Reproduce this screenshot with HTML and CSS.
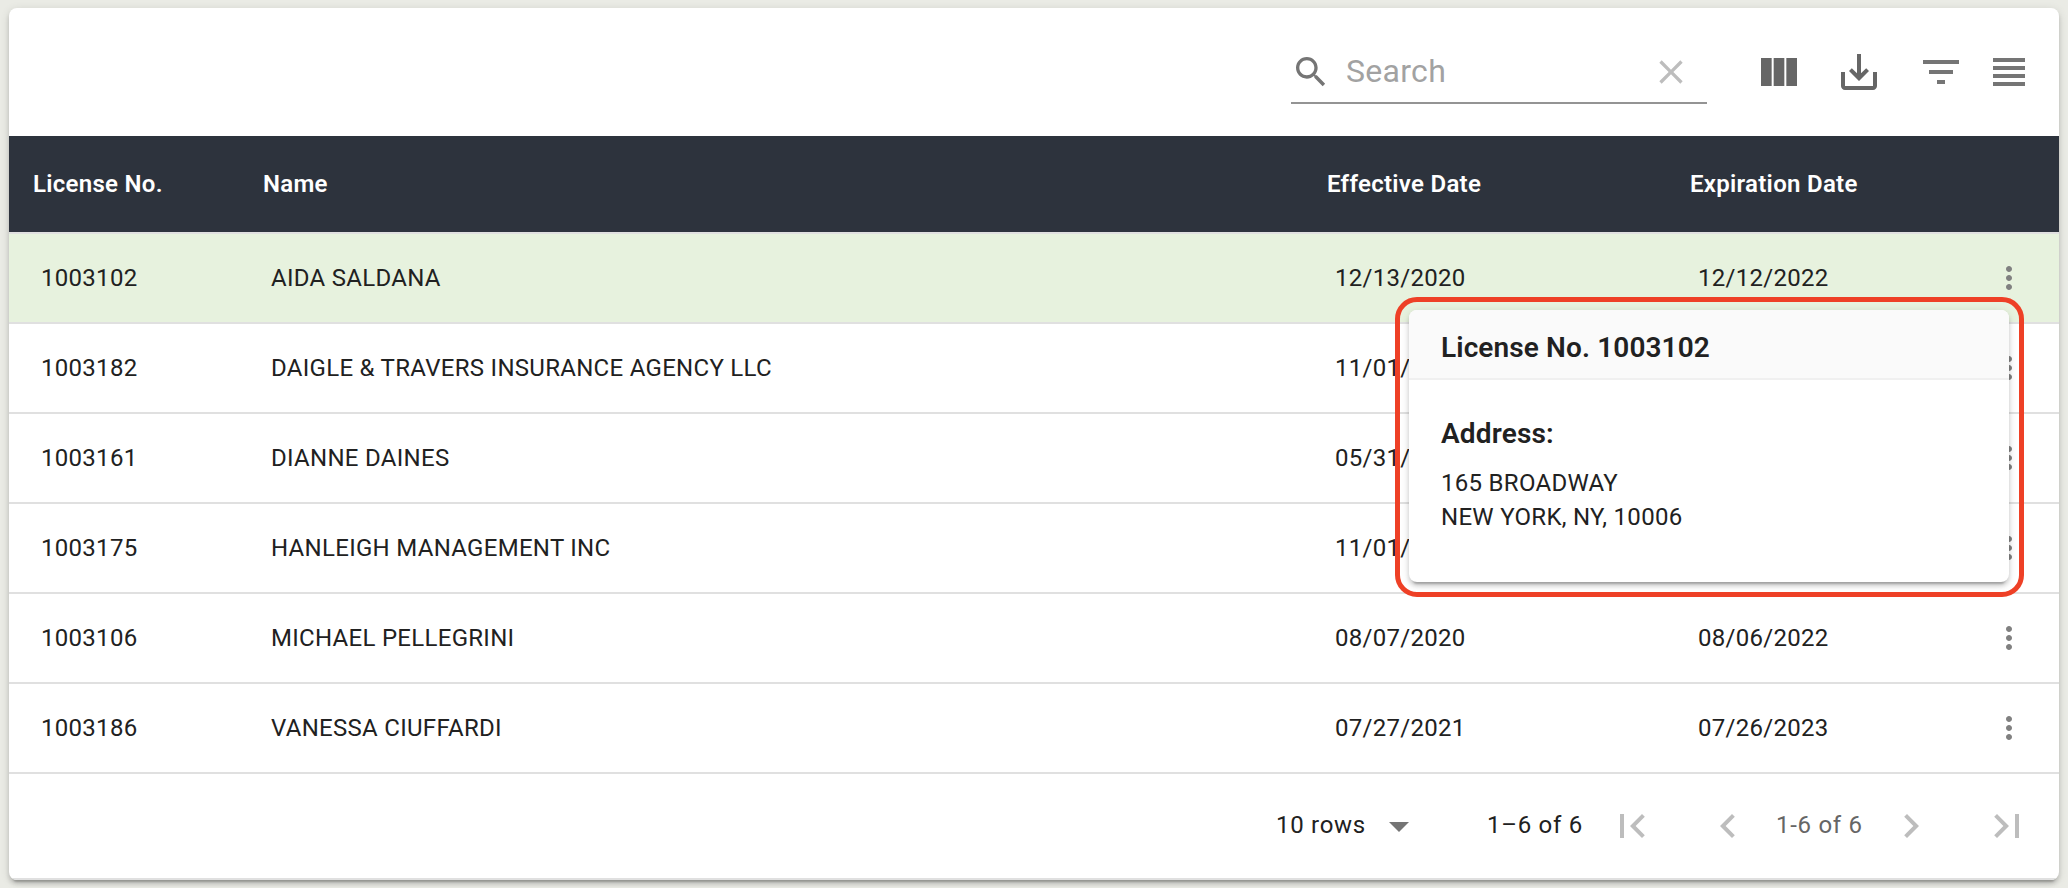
FILE: index.html
```html
<!DOCTYPE html>
<html lang="en">
<head>
<meta charset="utf-8">
<title>Licenses</title>
<link rel="stylesheet" href="styles.css">
</head>
<body>
<svg class="sprite" width="0" height="0" aria-hidden="true">
  <symbol id="more" viewBox="0 0 24 24"><path d="M12 8c1.1 0 2-.9 2-2s-.9-2-2-2-2 .9-2 2 .9 2 2 2zm0 2c-1.1 0-2 .9-2 2s.9 2 2 2 2-.9 2-2-.9-2-2-2zm0 6c-1.1 0-2 .9-2 2s.9 2 2 2 2-.9 2-2-.9-2-2-2z"/></symbol>
</svg>
<main class="card">
  <div class="toolbar">
    <div class="search">
      <svg class="search-icon" viewBox="0 0 24 24"><path d="M15.5 14h-.79l-.28-.27C15.41 12.59 16 11.11 16 9.5 16 5.91 13.09 3 9.5 3S3 5.91 3 9.5 5.91 16 9.5 16c1.61 0 3.09-.59 4.23-1.57l.27.28v.79l5 4.99L20.49 19l-4.99-5zm-6 0C7.01 14 5 11.99 5 9.5S7.01 5 9.5 5 14 7.01 14 9.5 11.99 14 9.5 14z"/></svg>
      <span class="search-text">Search</span>
      <svg class="clear-icon" viewBox="0 0 24 24"><path d="M19 6.41L17.59 5 12 10.59 6.41 5 5 6.41 10.59 12 5 17.59 6.41 19 12 13.41 17.59 19 19 17.59 13.41 12z"/></svg>
    </div>
    <svg class="tool columns" viewBox="0 0 24 24"><path d="M14.67 5v14H9.33V5h5.34zm1 14H21V5h-5.33v14zm-7.34 0V5H3v14h5.33z"/></svg>
    <svg class="tool export" viewBox="0 0 24 24"><path d="M19 12v7H5v-7H3v7c0 1.1.9 2 2 2h14c1.1 0 2-.9 2-2v-7h-2zm-6 .67l2.59-2.58L17 11.5l-5 5-5-5 1.41-1.41L11 12.67V3h2z"/></svg>
    <svg class="tool filter" viewBox="0 0 24 24"><path d="M10 18h4v-2h-4v2zM3 6v2h18V6H3zm3 7h12v-2H6v2z"/></svg>
    <svg class="tool density" viewBox="0 0 24 24"><path d="M4 15h16v-2H4v2zm0 4h16v-2H4v2zm0-8h16V9H4v2zm0-6v2h16V5H4z"/></svg>
  </div>
  <div class="row head"><span>License No.</span><span>Name</span><span>Effective Date</span><span>Expiration Date</span></div>
  <div class="row selected"><span>1003102</span><span>AIDA SALDANA</span><span>12/13/2020</span><span>12/12/2022</span><svg class="more"><use href="#more"/></svg></div>
  <div class="row"><span>1003182</span><span>DAIGLE &amp; TRAVERS INSURANCE AGENCY LLC</span><span>11/01/</span><span></span><svg class="more"><use href="#more"/></svg></div>
  <div class="row"><span>1003161</span><span>DIANNE DAINES</span><span>05/31/</span><span></span><svg class="more"><use href="#more"/></svg></div>
  <div class="row"><span>1003175</span><span>HANLEIGH MANAGEMENT INC</span><span>11/01/</span><span></span><svg class="more"><use href="#more"/></svg></div>
  <div class="row"><span>1003106</span><span>MICHAEL PELLEGRINI</span><span>08/07/2020</span><span>08/06/2022</span><svg class="more"><use href="#more"/></svg></div>
  <div class="row"><span>1003186</span><span>VANESSA CIUFFARDI</span><span>07/27/2021</span><span>07/26/2023</span><svg class="more"><use href="#more"/></svg></div>
  <div class="footer">
    <span class="page-size">10 rows</span>
    <svg class="caret" viewBox="0 0 24 24"><path d="M7 10l5 5 5-5z"/></svg>
    <span class="range">1–6 of 6</span>
    <svg class="nav" viewBox="0 0 24 24"><path d="M18.41 16.59L13.82 12l4.59-4.59L17 6l-6 6 6 6zM6 6h2v12H6z"/></svg>
    <svg class="nav prev" viewBox="0 0 24 24"><path d="M15.41 16.59L10.83 12l4.58-4.59L14 6l-6 6 6 6z"/></svg>
    <span class="range muted">1-6 of 6</span>
    <svg class="nav" viewBox="0 0 24 24"><path d="M8.59 16.59L13.17 12 8.59 7.41 10 6l6 6-6 6z"/></svg>
    <svg class="nav last" viewBox="0 0 24 24"><path d="M5.59 7.41L10.18 12l-4.59 4.59L7 18l6-6-6-6zM16 6h2v12h-2z"/></svg>
  </div>
</main>
<section class="popover">
  <h2 class="popover-title">License No. 1003102</h2>
  <div class="popover-body">
    <h3 class="popover-label">Address:</h3>
    <p class="address">165 BROADWAY<br>NEW YORK, NY, 10006</p>
  </div>
</section>
<div class="highlight"></div>
</body>
</html>
```

FILE: styles.css
```css
* { box-sizing: border-box; }
body {
  margin: 0;
  padding: 8px 9px;
  height: 888px;
  overflow: hidden;
  background: #eaebe5;
  color: #212121;
  font: 400 24px/34px Roboto, sans-serif;
  letter-spacing: 0.29px;
}
.sprite { position: absolute; }
svg { flex: none; fill: currentColor; }
.card {
  height: 872px;
  overflow: hidden;
  background: #fff;
  border-radius: 8px;
  box-shadow: 0 6px 2px -4px rgba(0,0,0,.2), 0 4px 4px 0 rgba(0,0,0,.14), 0 2px 10px 0 rgba(0,0,0,.12);
}
.toolbar {
  display: flex;
  align-items: center;
  justify-content: flex-end;
  height: 128px;
  padding-right: 26px;
}
.search {
  display: flex;
  align-items: center;
  width: 416px;
  height: 64px;
  border-bottom: 2px solid #949494;
  margin-right: 48px;
  color: #757575;
}
.search-icon, .clear-icon { width: 40px; height: 40px; margin-top: 2px; }
.search-text { flex: 1; padding-left: 15px; font-size: 32px; line-height: 38px; color: #a2a2a2; letter-spacing: 0.3px; }
.clear-icon { margin-right: 16px; color: #bdbdbd; }
.tool { width: 48px; height: 48px; color: #757575; }
.columns, .export { color: #666; margin-right: 32px; }
.export { margin-right: 34px; }
.filter { margin-right: 20px; }
.row {
  display: grid;
  grid-template-columns: 230px 1064px 363px 316px 36px;
  align-items: center;
  height: 90px;
  border-bottom: 2px solid #e0e0e0;
}
.row > span { padding-left: 32px; white-space: nowrap; }
.row.head {
  height: 98px;
  background: #2d333d;
  color: #fff;
  font-weight: 600;
}
.row.head > span { padding-left: 24px; }
.selected { background: #e7f2de; }
.more { width: 36px; height: 36px; margin-left: 9px; color: #808080; }
.footer {
  display: flex;
  align-items: center;
  height: 106px;
  padding-left: 1267px;
  border-bottom: 2px solid #e0e0e0;
  white-space: nowrap;
  letter-spacing: 0.72px;
}
.page-size, .range { padding-bottom: 2px; }
.page-size { width: 99px; }
.caret { width: 48px; height: 48px; color: #757575; }
.range { width: 121px; margin-left: 64px; }
.nav { width: 48px; height: 48px; color: #bdbdbd; }
.prev { margin-left: 48px; }
.range.muted { width: 111px; margin-left: 24px; color: #666; }
.last { margin-left: 48px; }
.popover {
  position: absolute;
  left: 1409px;
  top: 310px;
  width: 600px;
  height: 272px;
  overflow: hidden;
  background: #fff;
  border-radius: 8px;
  box-shadow: 0 6px 2px -4px rgba(0,0,0,.2), 0 4px 4px 0 rgba(0,0,0,.14), 0 2px 10px 0 rgba(0,0,0,.12);
}
.popover-title {
  margin: 0;
  height: 70px;
  padding: 21px 32px 13px;
  background: #fafafa;
  border-bottom: 2px solid #f0f0f0;
  font-size: 28px;
  font-weight: 600;
  letter-spacing: 0.12px;
}
.popover-body { padding: 37px 32px; }
.popover-label { margin: 0 0 15px; font-size: 28px; font-weight: 600; letter-spacing: 0.16px; }
.address { margin: 0; }
.highlight {
  position: absolute;
  left: 1395px;
  top: 297px;
  width: 629px;
  height: 300px;
  border: 5px solid #ee4026;
  border-radius: 22px;
}
```
